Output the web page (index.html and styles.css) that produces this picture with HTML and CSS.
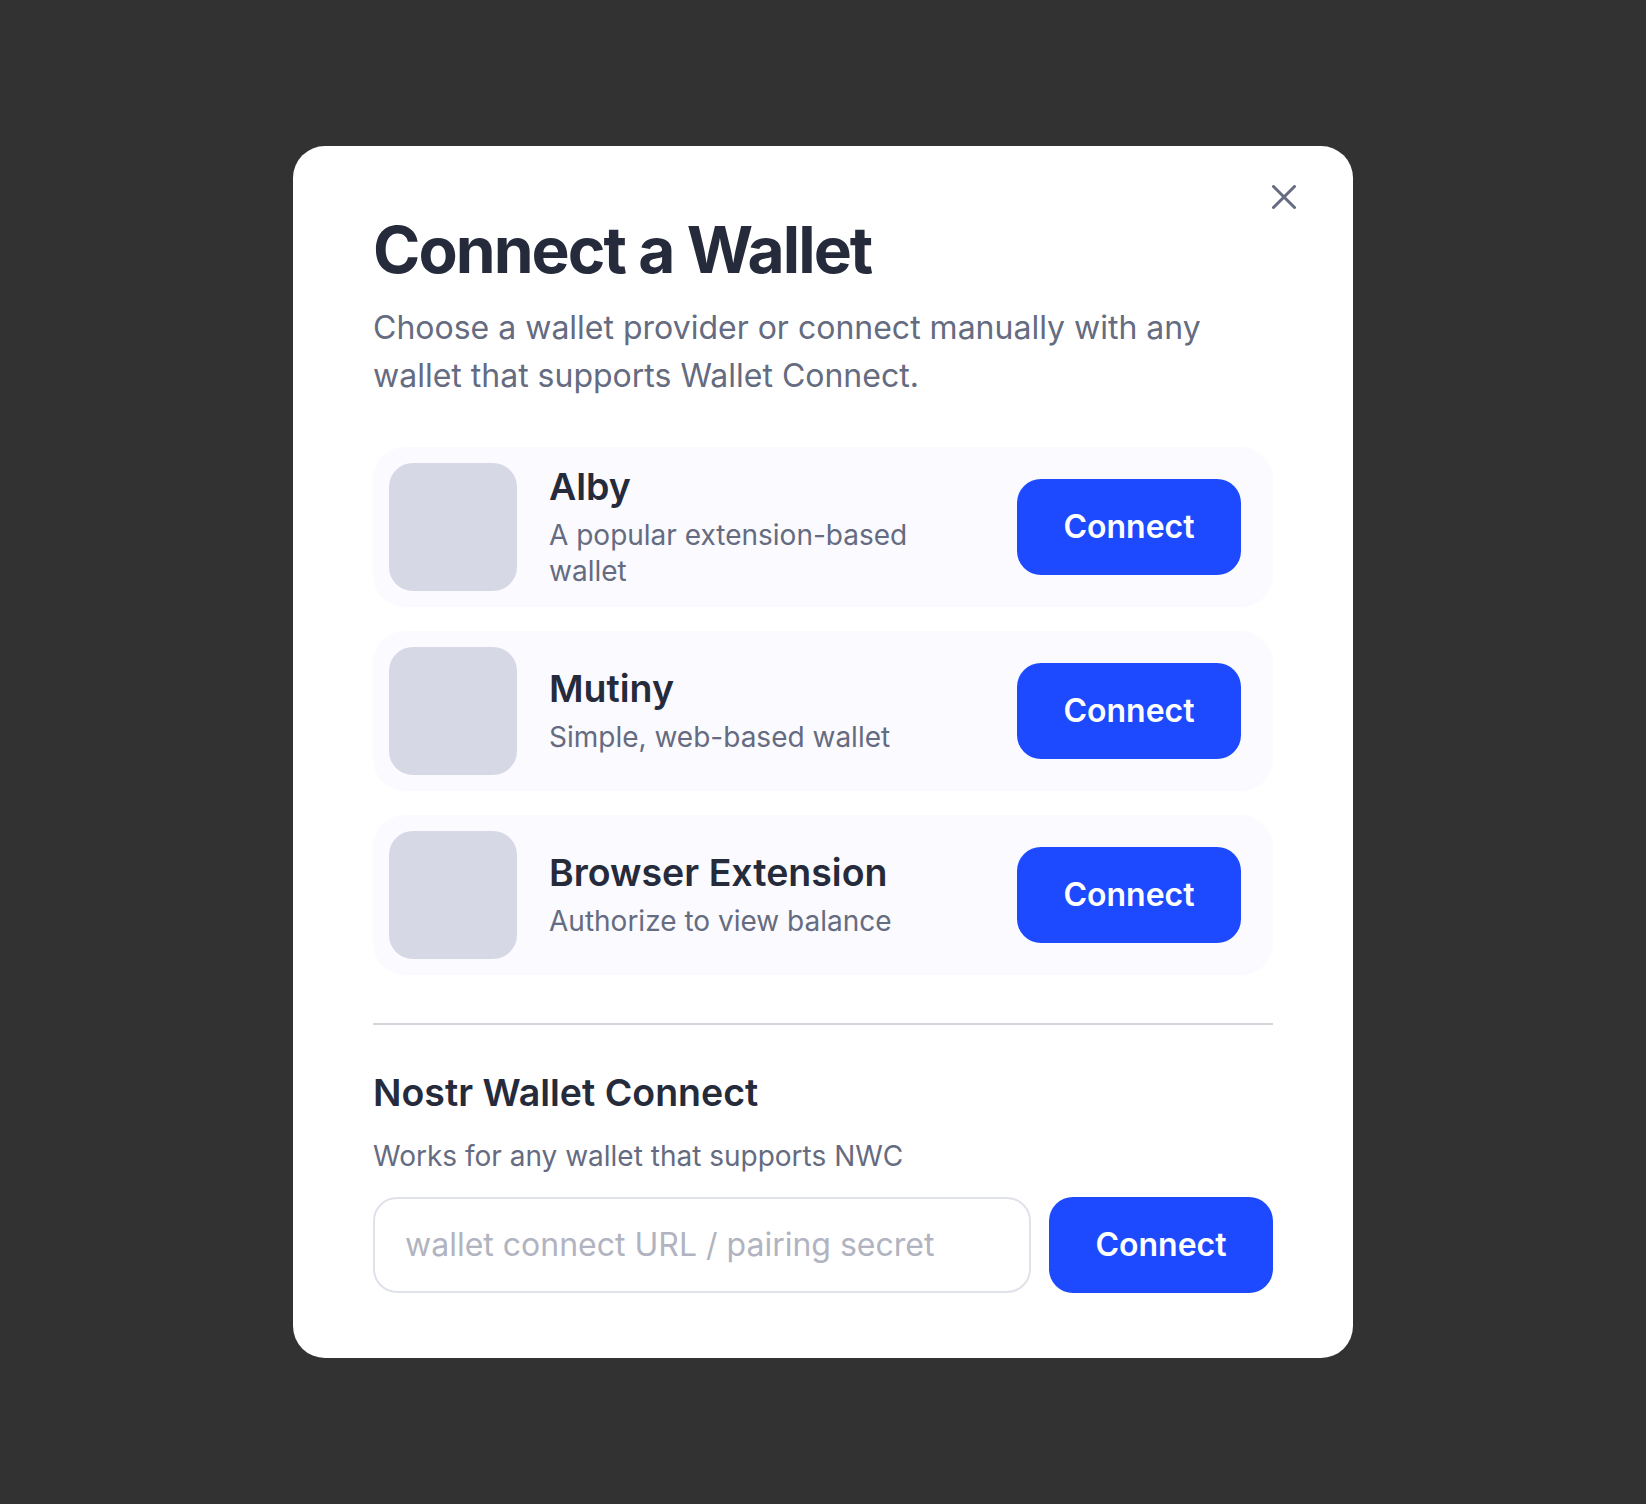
FILE: index.html
```html
<!DOCTYPE html>
<html lang="en">
<head>
<meta charset="utf-8">
<title>Connect a Wallet</title>
<link rel="stylesheet" href="styles.css">
</head>
<body>
<div class="overlay">
  <div class="modal">
    <button class="close" aria-label="Close">
      <svg width="24" height="24" viewBox="0 0 24 24" fill="none" stroke="currentColor" stroke-width="3" stroke-linecap="round"><path d="M1.5 1.5 22.5 22.5M22.5 1.5 1.5 22.5"/></svg>
    </button>
    <h1 class="title">Connect a Wallet</h1>
    <p class="subtitle">Choose a wallet provider or connect manually with any wallet that supports Wallet Connect.</p>

    <div class="list">
      <div class="card">
        <div class="logo"></div>
        <div class="info">
          <div class="name">Alby</div>
          <div class="desc">A popular extension-based wallet</div>
        </div>
        <button class="btn">Connect</button>
      </div>
      <div class="card">
        <div class="logo"></div>
        <div class="info">
          <div class="name">Mutiny</div>
          <div class="desc">Simple, web-based wallet</div>
        </div>
        <button class="btn">Connect</button>
      </div>
      <div class="card">
        <div class="logo"></div>
        <div class="info">
          <div class="name">Browser Extension</div>
          <div class="desc">Authorize to view balance</div>
        </div>
        <button class="btn">Connect</button>
      </div>
    </div>

    <hr class="divider">

    <h2 class="nwc-title">Nostr Wallet Connect</h2>
    <p class="nwc-desc">Works for any wallet that supports NWC</p>
    <div class="nwc-row">
      <input class="nwc-input" type="text" placeholder="wallet connect URL / pairing secret">
      <button class="btn">Connect</button>
    </div>
  </div>
</div>
</body>
</html>
```
FILE: styles.css
```css
* { box-sizing: border-box; }
html, body { margin: 0; padding: 0; }
body {
  background: #323232;
  font-family: Inter, "Noto Sans", sans-serif;
  color: #262b3b;
}
.overlay {
  min-height: 100vh;
  display: flex;
  align-items: center;
  justify-content: center;
}
.modal {
  position: relative;
  width: 1060px;
  background: #ffffff;
  border-radius: 32px;
  padding: 66px 80px 65px;
}
.close {
  position: absolute;
  top: 39px;
  right: 57px;
  width: 24px;
  height: 24px;
  padding: 0;
  border: 0;
  background: none;
  color: #656b80;
  display: block;
}
.close svg { display: block; }
.title {
  margin: 0;
  font-size: 64px;
  line-height: 1.2;
  font-weight: 700;
  letter-spacing: -0.03em;
  color: #262b3b;
}
.subtitle {
  margin: 15px 0 0;
  font-size: 32px;
  line-height: 48px;
  color: #656b80;
  font-weight: 400;
}
.list {
  margin-top: 47px;
  display: flex;
  flex-direction: column;
  gap: 24px;
}
.card {
  display: flex;
  align-items: center;
  background: #fafaff;
  border-radius: 32px;
  padding: 16px 32px 16px 16px;
  gap: 32px;
}
.logo {
  width: 128px;
  height: 128px;
  flex: none;
  background: #d6d8e5;
  border-radius: 24px;
}
.info {
  flex: 1;
  min-width: 0;
  padding-right: 40px;
}
.name {
  font-size: 37.5px;
  line-height: 44px;
  font-weight: 600;
  color: #262b3b;
}
.desc {
  margin-top: 8px;
  font-size: 28px;
  line-height: 36px;
  color: #656b80;
}
.btn {
  flex: none;
  width: 224px;
  height: 96px;
  border: 0;
  border-radius: 24px;
  background: #1d4aff;
  color: #ffffff;
  font-family: Inter, "Noto Sans", sans-serif;
  font-size: 32px;
  font-weight: 600;
}
.divider {
  margin: 48px 0 0;
  border: 0;
  height: 2px;
  background: #d3d5dc;
}
.nwc-title {
  margin: 46px 0 0;
  font-size: 37.5px;
  line-height: 44px;
  font-weight: 600;
  color: #262b3b;
}
.nwc-desc {
  margin: 23px 0 0;
  font-size: 28px;
  line-height: 36px;
  color: #656b80;
}
.nwc-row {
  margin-top: 23px;
  display: flex;
  gap: 18px;
}
.nwc-input {
  flex: 1;
  min-width: 0;
  height: 96px;
  border: 2px solid #e0e2ea;
  border-radius: 24px;
  padding: 0 30px;
  font-family: Inter, "Noto Sans", sans-serif;
  font-size: 32px;
  color: #262b3b;
  background: #fff;
  outline: none;
}
.nwc-input::placeholder { color: #b1b4c0; }
```
